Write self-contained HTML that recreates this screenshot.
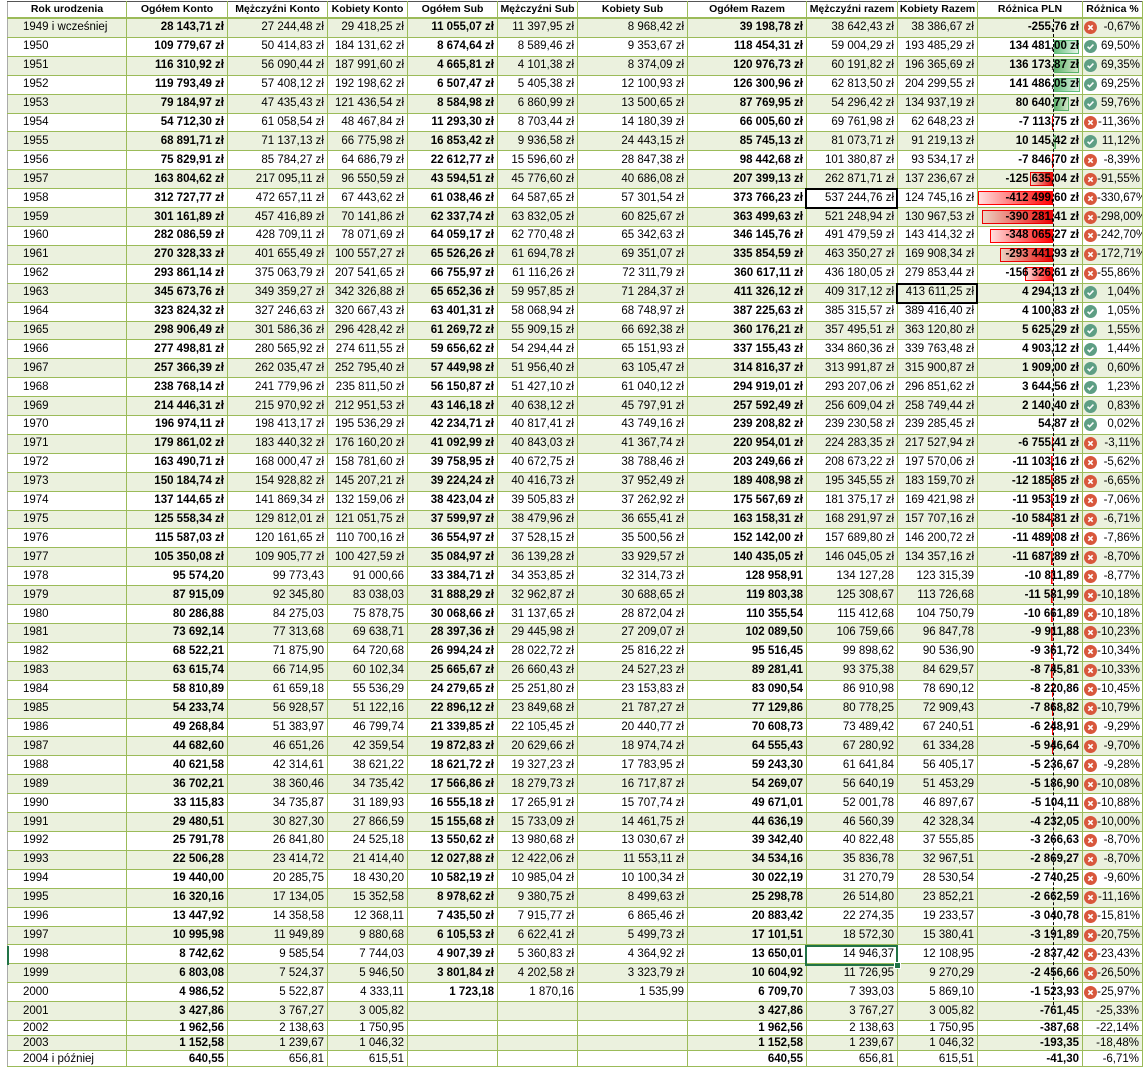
<!DOCTYPE html>
<html><head><meta charset="utf-8">
<style>
html,body{margin:0;padding:0;background:#fff;width:1146px;height:1068px;overflow:hidden}
body{position:relative;font-family:"Liberation Sans",Arial,sans-serif;font-size:11.5px;color:#000}
table{position:absolute;left:7px;top:1px;border-collapse:collapse;table-layout:fixed;width:1135px}
td{border-right:1px solid #9bbb59;border-bottom:1px solid #9bbb59;height:17.92px;padding:0 3px 0 0;text-align:right;white-space:nowrap;overflow:hidden;line-height:17px;vertical-align:middle}
tr.h td{font-weight:bold;text-align:center;border-top:1px solid #555;border-bottom:2px solid #9bbb59;height:15px;line-height:15px;padding:0;font-size:10.5px}
tr:nth-child(even) td{background:#ebf1de}
td:first-child{text-align:left;padding-left:15px;border-left:1px solid #aaa}
tr.h td:first-child{padding-left:0;text-align:center}
td:nth-child(2),td:nth-child(5),td:nth-child(8),td:nth-child(11){font-weight:bold}
tr.s td{height:14px;line-height:13px}
tr.l td{height:15px;line-height:14px}
td.p{padding-left:1px;padding-right:2px}
td.p svg{float:left;margin-top:2px}
.bar{position:absolute;height:14px;mix-blend-mode:multiply;box-sizing:border-box}
.g{background:linear-gradient(to right,#63be7b,#e6f4e9);border:1px solid #63be7b;border-left:none}
.r{background:linear-gradient(to right,#ffdede,#ff0000);border:1px solid #ff0000;border-right:none}
.z{position:absolute;left:1053px;top:19px;height:986px;border-left:1px dashed #000}
.bx{position:absolute;box-sizing:border-box;border:2px solid #000}
</style></head><body>
<svg width="0" height="0" style="position:absolute"><defs>
<symbol id="ok" viewBox="0 0 12 12"><circle cx="6" cy="6" r="6" fill="#5e9e84"/><path d="M3.3 6.2l1.8 1.8 3.6-3.8" stroke="#fff" stroke-width="1.4" fill="none"/></symbol>
<symbol id="no" viewBox="0 0 12 12"><circle cx="6" cy="6" r="6" fill="#d8573c"/><path d="M4 4l4 4M8 4l-4 4" stroke="#fff" stroke-width="1.5"/></symbol>
</defs></svg>
<table>
<colgroup><col style="width:119px"><col style="width:101px"><col style="width:100px"><col style="width:80px"><col style="width:90px"><col style="width:80px"><col style="width:110px"><col style="width:119px"><col style="width:91px"><col style="width:80px"><col style="width:105px"><col style="width:60px"></colgroup>
<tr class="h"><td>Rok urodzenia</td><td>Ogółem Konto</td><td>Mężczyźni Konto</td><td>Kobiety Konto</td><td>Ogółem Sub</td><td>Mężczyźni Sub</td><td>Kobiety Sub</td><td>Ogółem Razem</td><td>Mężczyźni razem</td><td>Kobiety Razem</td><td>Różnica PLN</td><td>Różnica %</td></tr>
<tr><td>1949 i wcześniej</td><td>28 143,71 zł</td><td>27 244,48 zł</td><td>29 418,25 zł</td><td>11 055,07 zł</td><td>11 397,95 zł</td><td>8 968,42 zł</td><td>39 198,78 zł</td><td>38 642,43 zł</td><td>38 386,67 zł</td><td>-255,76 zł</td><td class="p"><svg width="13" height="13"><use href="#no"/></svg>-0,67%</td></tr>
<tr><td>1950</td><td>109 779,67 zł</td><td>50 414,83 zł</td><td>184 131,62 zł</td><td>8 674,64 zł</td><td>8 589,46 zł</td><td>9 353,67 zł</td><td>118 454,31 zł</td><td>59 004,29 zł</td><td>193 485,29 zł</td><td>134 481,00 zł</td><td class="p"><svg width="13" height="13"><use href="#ok"/></svg>69,50%</td></tr>
<tr><td>1951</td><td>116 310,92 zł</td><td>56 090,44 zł</td><td>187 991,60 zł</td><td>4 665,81 zł</td><td>4 101,38 zł</td><td>8 374,09 zł</td><td>120 976,73 zł</td><td>60 191,82 zł</td><td>196 365,69 zł</td><td>136 173,87 zł</td><td class="p"><svg width="13" height="13"><use href="#ok"/></svg>69,35%</td></tr>
<tr><td>1952</td><td>119 793,49 zł</td><td>57 408,12 zł</td><td>192 198,62 zł</td><td>6 507,47 zł</td><td>5 405,38 zł</td><td>12 100,93 zł</td><td>126 300,96 zł</td><td>62 813,50 zł</td><td>204 299,55 zł</td><td>141 486,05 zł</td><td class="p"><svg width="13" height="13"><use href="#ok"/></svg>69,25%</td></tr>
<tr><td>1953</td><td>79 184,97 zł</td><td>47 435,43 zł</td><td>121 436,54 zł</td><td>8 584,98 zł</td><td>6 860,99 zł</td><td>13 500,65 zł</td><td>87 769,95 zł</td><td>54 296,42 zł</td><td>134 937,19 zł</td><td>80 640,77 zł</td><td class="p"><svg width="13" height="13"><use href="#ok"/></svg>59,76%</td></tr>
<tr><td>1954</td><td>54 712,30 zł</td><td>61 058,54 zł</td><td>48 467,84 zł</td><td>11 293,30 zł</td><td>8 703,44 zł</td><td>14 180,39 zł</td><td>66 005,60 zł</td><td>69 761,98 zł</td><td>62 648,23 zł</td><td>-7 113,75 zł</td><td class="p"><svg width="13" height="13"><use href="#no"/></svg>-11,36%</td></tr>
<tr><td>1955</td><td>68 891,71 zł</td><td>71 137,13 zł</td><td>66 775,98 zł</td><td>16 853,42 zł</td><td>9 936,58 zł</td><td>24 443,15 zł</td><td>85 745,13 zł</td><td>81 073,71 zł</td><td>91 219,13 zł</td><td>10 145,42 zł</td><td class="p"><svg width="13" height="13"><use href="#ok"/></svg>11,12%</td></tr>
<tr><td>1956</td><td>75 829,91 zł</td><td>85 784,27 zł</td><td>64 686,79 zł</td><td>22 612,77 zł</td><td>15 596,60 zł</td><td>28 847,38 zł</td><td>98 442,68 zł</td><td>101 380,87 zł</td><td>93 534,17 zł</td><td>-7 846,70 zł</td><td class="p"><svg width="13" height="13"><use href="#no"/></svg>-8,39%</td></tr>
<tr><td>1957</td><td>163 804,62 zł</td><td>217 095,11 zł</td><td>96 550,59 zł</td><td>43 594,51 zł</td><td>45 776,60 zł</td><td>40 686,08 zł</td><td>207 399,13 zł</td><td>262 871,71 zł</td><td>137 236,67 zł</td><td>-125 635,04 zł</td><td class="p"><svg width="13" height="13"><use href="#no"/></svg>-91,55%</td></tr>
<tr><td>1958</td><td>312 727,77 zł</td><td>472 657,11 zł</td><td>67 443,62 zł</td><td>61 038,46 zł</td><td>64 587,65 zł</td><td>57 301,54 zł</td><td>373 766,23 zł</td><td>537 244,76 zł</td><td>124 745,16 zł</td><td>-412 499,60 zł</td><td class="p"><svg width="13" height="13"><use href="#no"/></svg>-330,67%</td></tr>
<tr><td>1959</td><td>301 161,89 zł</td><td>457 416,89 zł</td><td>70 141,86 zł</td><td>62 337,74 zł</td><td>63 832,05 zł</td><td>60 825,67 zł</td><td>363 499,63 zł</td><td>521 248,94 zł</td><td>130 967,53 zł</td><td>-390 281,41 zł</td><td class="p"><svg width="13" height="13"><use href="#no"/></svg>-298,00%</td></tr>
<tr><td>1960</td><td>282 086,59 zł</td><td>428 709,11 zł</td><td>78 071,69 zł</td><td>64 059,17 zł</td><td>62 770,48 zł</td><td>65 342,63 zł</td><td>346 145,76 zł</td><td>491 479,59 zł</td><td>143 414,32 zł</td><td>-348 065,27 zł</td><td class="p"><svg width="13" height="13"><use href="#no"/></svg>-242,70%</td></tr>
<tr><td>1961</td><td>270 328,33 zł</td><td>401 655,49 zł</td><td>100 557,27 zł</td><td>65 526,26 zł</td><td>61 694,78 zł</td><td>69 351,07 zł</td><td>335 854,59 zł</td><td>463 350,27 zł</td><td>169 908,34 zł</td><td>-293 441,93 zł</td><td class="p"><svg width="13" height="13"><use href="#no"/></svg>-172,71%</td></tr>
<tr><td>1962</td><td>293 861,14 zł</td><td>375 063,79 zł</td><td>207 541,65 zł</td><td>66 755,97 zł</td><td>61 116,26 zł</td><td>72 311,79 zł</td><td>360 617,11 zł</td><td>436 180,05 zł</td><td>279 853,44 zł</td><td>-156 326,61 zł</td><td class="p"><svg width="13" height="13"><use href="#no"/></svg>-55,86%</td></tr>
<tr><td>1963</td><td>345 673,76 zł</td><td>349 359,27 zł</td><td>342 326,88 zł</td><td>65 652,36 zł</td><td>59 957,85 zł</td><td>71 284,37 zł</td><td>411 326,12 zł</td><td>409 317,12 zł</td><td>413 611,25 zł</td><td>4 294,13 zł</td><td class="p"><svg width="13" height="13"><use href="#ok"/></svg>1,04%</td></tr>
<tr><td>1964</td><td>323 824,32 zł</td><td>327 246,63 zł</td><td>320 667,43 zł</td><td>63 401,31 zł</td><td>58 068,94 zł</td><td>68 748,97 zł</td><td>387 225,63 zł</td><td>385 315,57 zł</td><td>389 416,40 zł</td><td>4 100,83 zł</td><td class="p"><svg width="13" height="13"><use href="#ok"/></svg>1,05%</td></tr>
<tr><td>1965</td><td>298 906,49 zł</td><td>301 586,36 zł</td><td>296 428,42 zł</td><td>61 269,72 zł</td><td>55 909,15 zł</td><td>66 692,38 zł</td><td>360 176,21 zł</td><td>357 495,51 zł</td><td>363 120,80 zł</td><td>5 625,29 zł</td><td class="p"><svg width="13" height="13"><use href="#ok"/></svg>1,55%</td></tr>
<tr><td>1966</td><td>277 498,81 zł</td><td>280 565,92 zł</td><td>274 611,55 zł</td><td>59 656,62 zł</td><td>54 294,44 zł</td><td>65 151,93 zł</td><td>337 155,43 zł</td><td>334 860,36 zł</td><td>339 763,48 zł</td><td>4 903,12 zł</td><td class="p"><svg width="13" height="13"><use href="#ok"/></svg>1,44%</td></tr>
<tr><td>1967</td><td>257 366,39 zł</td><td>262 035,47 zł</td><td>252 795,40 zł</td><td>57 449,98 zł</td><td>51 956,40 zł</td><td>63 105,47 zł</td><td>314 816,37 zł</td><td>313 991,87 zł</td><td>315 900,87 zł</td><td>1 909,00 zł</td><td class="p"><svg width="13" height="13"><use href="#ok"/></svg>0,60%</td></tr>
<tr><td>1968</td><td>238 768,14 zł</td><td>241 779,96 zł</td><td>235 811,50 zł</td><td>56 150,87 zł</td><td>51 427,10 zł</td><td>61 040,12 zł</td><td>294 919,01 zł</td><td>293 207,06 zł</td><td>296 851,62 zł</td><td>3 644,56 zł</td><td class="p"><svg width="13" height="13"><use href="#ok"/></svg>1,23%</td></tr>
<tr><td>1969</td><td>214 446,31 zł</td><td>215 970,92 zł</td><td>212 951,53 zł</td><td>43 146,18 zł</td><td>40 638,12 zł</td><td>45 797,91 zł</td><td>257 592,49 zł</td><td>256 609,04 zł</td><td>258 749,44 zł</td><td>2 140,40 zł</td><td class="p"><svg width="13" height="13"><use href="#ok"/></svg>0,83%</td></tr>
<tr><td>1970</td><td>196 974,11 zł</td><td>198 413,17 zł</td><td>195 536,29 zł</td><td>42 234,71 zł</td><td>40 817,41 zł</td><td>43 749,16 zł</td><td>239 208,82 zł</td><td>239 230,58 zł</td><td>239 285,45 zł</td><td>54,87 zł</td><td class="p"><svg width="13" height="13"><use href="#ok"/></svg>0,02%</td></tr>
<tr><td>1971</td><td>179 861,02 zł</td><td>183 440,32 zł</td><td>176 160,20 zł</td><td>41 092,99 zł</td><td>40 843,03 zł</td><td>41 367,74 zł</td><td>220 954,01 zł</td><td>224 283,35 zł</td><td>217 527,94 zł</td><td>-6 755,41 zł</td><td class="p"><svg width="13" height="13"><use href="#no"/></svg>-3,11%</td></tr>
<tr><td>1972</td><td>163 490,71 zł</td><td>168 000,47 zł</td><td>158 781,60 zł</td><td>39 758,95 zł</td><td>40 672,75 zł</td><td>38 788,46 zł</td><td>203 249,66 zł</td><td>208 673,22 zł</td><td>197 570,06 zł</td><td>-11 103,16 zł</td><td class="p"><svg width="13" height="13"><use href="#no"/></svg>-5,62%</td></tr>
<tr><td>1973</td><td>150 184,74 zł</td><td>154 928,82 zł</td><td>145 207,21 zł</td><td>39 224,24 zł</td><td>40 416,73 zł</td><td>37 952,49 zł</td><td>189 408,98 zł</td><td>195 345,55 zł</td><td>183 159,70 zł</td><td>-12 185,85 zł</td><td class="p"><svg width="13" height="13"><use href="#no"/></svg>-6,65%</td></tr>
<tr><td>1974</td><td>137 144,65 zł</td><td>141 869,34 zł</td><td>132 159,06 zł</td><td>38 423,04 zł</td><td>39 505,83 zł</td><td>37 262,92 zł</td><td>175 567,69 zł</td><td>181 375,17 zł</td><td>169 421,98 zł</td><td>-11 953,19 zł</td><td class="p"><svg width="13" height="13"><use href="#no"/></svg>-7,06%</td></tr>
<tr><td>1975</td><td>125 558,34 zł</td><td>129 812,01 zł</td><td>121 051,75 zł</td><td>37 599,97 zł</td><td>38 479,96 zł</td><td>36 655,41 zł</td><td>163 158,31 zł</td><td>168 291,97 zł</td><td>157 707,16 zł</td><td>-10 584,81 zł</td><td class="p"><svg width="13" height="13"><use href="#no"/></svg>-6,71%</td></tr>
<tr><td>1976</td><td>115 587,03 zł</td><td>120 161,65 zł</td><td>110 700,16 zł</td><td>36 554,97 zł</td><td>37 528,15 zł</td><td>35 500,56 zł</td><td>152 142,00 zł</td><td>157 689,80 zł</td><td>146 200,72 zł</td><td>-11 489,08 zł</td><td class="p"><svg width="13" height="13"><use href="#no"/></svg>-7,86%</td></tr>
<tr><td>1977</td><td>105 350,08 zł</td><td>109 905,77 zł</td><td>100 427,59 zł</td><td>35 084,97 zł</td><td>36 139,28 zł</td><td>33 929,57 zł</td><td>140 435,05 zł</td><td>146 045,05 zł</td><td>134 357,16 zł</td><td>-11 687,89 zł</td><td class="p"><svg width="13" height="13"><use href="#no"/></svg>-8,70%</td></tr>
<tr><td>1978</td><td>95 574,20</td><td>99 773,43</td><td>91 000,66</td><td>33 384,71 zł</td><td>34 353,85 zł</td><td>32 314,73 zł</td><td>128 958,91</td><td>134 127,28</td><td>123 315,39</td><td>-10 811,89</td><td class="p"><svg width="13" height="13"><use href="#no"/></svg>-8,77%</td></tr>
<tr><td>1979</td><td>87 915,09</td><td>92 345,80</td><td>83 038,03</td><td>31 888,29 zł</td><td>32 962,87 zł</td><td>30 688,65 zł</td><td>119 803,38</td><td>125 308,67</td><td>113 726,68</td><td>-11 581,99</td><td class="p"><svg width="13" height="13"><use href="#no"/></svg>-10,18%</td></tr>
<tr><td>1980</td><td>80 286,88</td><td>84 275,03</td><td>75 878,75</td><td>30 068,66 zł</td><td>31 137,65 zł</td><td>28 872,04 zł</td><td>110 355,54</td><td>115 412,68</td><td>104 750,79</td><td>-10 661,89</td><td class="p"><svg width="13" height="13"><use href="#no"/></svg>-10,18%</td></tr>
<tr><td>1981</td><td>73 692,14</td><td>77 313,68</td><td>69 638,71</td><td>28 397,36 zł</td><td>29 445,98 zł</td><td>27 209,07 zł</td><td>102 089,50</td><td>106 759,66</td><td>96 847,78</td><td>-9 911,88</td><td class="p"><svg width="13" height="13"><use href="#no"/></svg>-10,23%</td></tr>
<tr><td>1982</td><td>68 522,21</td><td>71 875,90</td><td>64 720,68</td><td>26 994,24 zł</td><td>28 022,72 zł</td><td>25 816,22 zł</td><td>95 516,45</td><td>99 898,62</td><td>90 536,90</td><td>-9 361,72</td><td class="p"><svg width="13" height="13"><use href="#no"/></svg>-10,34%</td></tr>
<tr><td>1983</td><td>63 615,74</td><td>66 714,95</td><td>60 102,34</td><td>25 665,67 zł</td><td>26 660,43 zł</td><td>24 527,23 zł</td><td>89 281,41</td><td>93 375,38</td><td>84 629,57</td><td>-8 745,81</td><td class="p"><svg width="13" height="13"><use href="#no"/></svg>-10,33%</td></tr>
<tr><td>1984</td><td>58 810,89</td><td>61 659,18</td><td>55 536,29</td><td>24 279,65 zł</td><td>25 251,80 zł</td><td>23 153,83 zł</td><td>83 090,54</td><td>86 910,98</td><td>78 690,12</td><td>-8 220,86</td><td class="p"><svg width="13" height="13"><use href="#no"/></svg>-10,45%</td></tr>
<tr><td>1985</td><td>54 233,74</td><td>56 928,57</td><td>51 122,16</td><td>22 896,12 zł</td><td>23 849,68 zł</td><td>21 787,27 zł</td><td>77 129,86</td><td>80 778,25</td><td>72 909,43</td><td>-7 868,82</td><td class="p"><svg width="13" height="13"><use href="#no"/></svg>-10,79%</td></tr>
<tr><td>1986</td><td>49 268,84</td><td>51 383,97</td><td>46 799,74</td><td>21 339,85 zł</td><td>22 105,45 zł</td><td>20 440,77 zł</td><td>70 608,73</td><td>73 489,42</td><td>67 240,51</td><td>-6 248,91</td><td class="p"><svg width="13" height="13"><use href="#no"/></svg>-9,29%</td></tr>
<tr><td>1987</td><td>44 682,60</td><td>46 651,26</td><td>42 359,54</td><td>19 872,83 zł</td><td>20 629,66 zł</td><td>18 974,74 zł</td><td>64 555,43</td><td>67 280,92</td><td>61 334,28</td><td>-5 946,64</td><td class="p"><svg width="13" height="13"><use href="#no"/></svg>-9,70%</td></tr>
<tr><td>1988</td><td>40 621,58</td><td>42 314,61</td><td>38 621,22</td><td>18 621,72 zł</td><td>19 327,23 zł</td><td>17 783,95 zł</td><td>59 243,30</td><td>61 641,84</td><td>56 405,17</td><td>-5 236,67</td><td class="p"><svg width="13" height="13"><use href="#no"/></svg>-9,28%</td></tr>
<tr><td>1989</td><td>36 702,21</td><td>38 360,46</td><td>34 735,42</td><td>17 566,86 zł</td><td>18 279,73 zł</td><td>16 717,87 zł</td><td>54 269,07</td><td>56 640,19</td><td>51 453,29</td><td>-5 186,90</td><td class="p"><svg width="13" height="13"><use href="#no"/></svg>-10,08%</td></tr>
<tr><td>1990</td><td>33 115,83</td><td>34 735,87</td><td>31 189,93</td><td>16 555,18 zł</td><td>17 265,91 zł</td><td>15 707,74 zł</td><td>49 671,01</td><td>52 001,78</td><td>46 897,67</td><td>-5 104,11</td><td class="p"><svg width="13" height="13"><use href="#no"/></svg>-10,88%</td></tr>
<tr><td>1991</td><td>29 480,51</td><td>30 827,30</td><td>27 866,59</td><td>15 155,68 zł</td><td>15 733,09 zł</td><td>14 461,75 zł</td><td>44 636,19</td><td>46 560,39</td><td>42 328,34</td><td>-4 232,05</td><td class="p"><svg width="13" height="13"><use href="#no"/></svg>-10,00%</td></tr>
<tr><td>1992</td><td>25 791,78</td><td>26 841,80</td><td>24 525,18</td><td>13 550,62 zł</td><td>13 980,68 zł</td><td>13 030,67 zł</td><td>39 342,40</td><td>40 822,48</td><td>37 555,85</td><td>-3 266,63</td><td class="p"><svg width="13" height="13"><use href="#no"/></svg>-8,70%</td></tr>
<tr><td>1993</td><td>22 506,28</td><td>23 414,72</td><td>21 414,40</td><td>12 027,88 zł</td><td>12 422,06 zł</td><td>11 553,11 zł</td><td>34 534,16</td><td>35 836,78</td><td>32 967,51</td><td>-2 869,27</td><td class="p"><svg width="13" height="13"><use href="#no"/></svg>-8,70%</td></tr>
<tr><td>1994</td><td>19 440,00</td><td>20 285,75</td><td>18 430,20</td><td>10 582,19 zł</td><td>10 985,04 zł</td><td>10 100,34 zł</td><td>30 022,19</td><td>31 270,79</td><td>28 530,54</td><td>-2 740,25</td><td class="p"><svg width="13" height="13"><use href="#no"/></svg>-9,60%</td></tr>
<tr><td>1995</td><td>16 320,16</td><td>17 134,05</td><td>15 352,58</td><td>8 978,62 zł</td><td>9 380,75 zł</td><td>8 499,63 zł</td><td>25 298,78</td><td>26 514,80</td><td>23 852,21</td><td>-2 662,59</td><td class="p"><svg width="13" height="13"><use href="#no"/></svg>-11,16%</td></tr>
<tr><td>1996</td><td>13 447,92</td><td>14 358,58</td><td>12 368,11</td><td>7 435,50 zł</td><td>7 915,77 zł</td><td>6 865,46 zł</td><td>20 883,42</td><td>22 274,35</td><td>19 233,57</td><td>-3 040,78</td><td class="p"><svg width="13" height="13"><use href="#no"/></svg>-15,81%</td></tr>
<tr><td>1997</td><td>10 995,98</td><td>11 949,89</td><td>9 880,68</td><td>6 105,53 zł</td><td>6 622,41 zł</td><td>5 499,73 zł</td><td>17 101,51</td><td>18 572,30</td><td>15 380,41</td><td>-3 191,89</td><td class="p"><svg width="13" height="13"><use href="#no"/></svg>-20,75%</td></tr>
<tr><td>1998</td><td>8 742,62</td><td>9 585,54</td><td>7 744,03</td><td>4 907,39 zł</td><td>5 360,83 zł</td><td>4 364,92 zł</td><td>13 650,01</td><td>14 946,37</td><td>12 108,95</td><td>-2 837,42</td><td class="p"><svg width="13" height="13"><use href="#no"/></svg>-23,43%</td></tr>
<tr><td>1999</td><td>6 803,08</td><td>7 524,37</td><td>5 946,50</td><td>3 801,84 zł</td><td>4 202,58 zł</td><td>3 323,79 zł</td><td>10 604,92</td><td>11 726,95</td><td>9 270,29</td><td>-2 456,66</td><td class="p"><svg width="13" height="13"><use href="#no"/></svg>-26,50%</td></tr>
<tr><td>2000</td><td>4 986,52</td><td>5 522,87</td><td>4 333,11</td><td>1 723,18</td><td>1 870,16</td><td>1 535,99</td><td>6 709,70</td><td>7 393,03</td><td>5 869,10</td><td>-1 523,93</td><td class="p"><svg width="13" height="13"><use href="#no"/></svg>-25,97%</td></tr>
<tr><td>2001</td><td>3 427,86</td><td>3 767,27</td><td>3 005,82</td><td></td><td></td><td></td><td>3 427,86</td><td>3 767,27</td><td>3 005,82</td><td>-761,45</td><td>-25,33%</td></tr>
<tr class="s"><td>2002</td><td>1 962,56</td><td>2 138,63</td><td>1 750,95</td><td></td><td></td><td></td><td>1 962,56</td><td>2 138,63</td><td>1 750,95</td><td>-387,68</td><td>-22,14%</td></tr>
<tr class="s"><td>2003</td><td>1 152,58</td><td>1 239,67</td><td>1 046,32</td><td></td><td></td><td></td><td>1 152,58</td><td>1 239,67</td><td>1 046,32</td><td>-193,35</td><td>-18,48%</td></tr>
<tr class="l"><td>2004 i później</td><td>640,55</td><td>656,81</td><td>615,51</td><td></td><td></td><td></td><td>640,55</td><td>656,81</td><td>615,51</td><td>-41,30</td><td>-6,71%</td></tr>
</table>

<div class="bar g" style="left:1054px;top:40px;width:24.5px"></div>
<div class="bar g" style="left:1054px;top:59px;width:24.8px"></div>
<div class="bar g" style="left:1054px;top:78px;width:25.7px"></div>
<div class="bar g" style="left:1054px;top:97px;width:14.7px"></div>
<div class="bar r" style="left:1051.7px;top:116px;width:1.3px"></div>
<div class="bar g" style="left:1054px;top:135px;width:1.8px"></div>
<div class="bar r" style="left:1051.6px;top:154px;width:1.4px"></div>
<div class="bar r" style="left:1030.2px;top:172.4px;width:22.8px"></div>
<div class="bar r" style="left:978px;top:191.3px;width:75px"></div>
<div class="bar r" style="left:982px;top:210.2px;width:71px"></div>
<div class="bar r" style="left:989.7px;top:229.1px;width:63.3px"></div>
<div class="bar r" style="left:999.6px;top:248px;width:53.4px"></div>
<div class="bar r" style="left:1024.6px;top:267px;width:28.4px"></div>
<div class="bar r" style="left:1051.8px;top:437.3px;width:1.2px"></div>
<div class="bar r" style="left:1051px;top:456.2px;width:2px"></div>
<div class="bar r" style="left:1050.8px;top:475.1px;width:2.2px"></div>
<div class="bar r" style="left:1050.8px;top:494px;width:2.2px"></div>
<div class="bar r" style="left:1051.1px;top:513px;width:1.9px"></div>
<div class="bar r" style="left:1050.9px;top:531.9px;width:2.1px"></div>
<div class="bar r" style="left:1050.9px;top:550.8px;width:2.1px"></div>
<div class="bar r" style="left:1051px;top:569.7px;width:2px"></div>
<div class="bar r" style="left:1050.9px;top:588.6px;width:2.1px"></div>
<div class="bar r" style="left:1051.1px;top:607.6px;width:1.9px"></div>
<div class="bar r" style="left:1051.2px;top:626.5px;width:1.8px"></div>
<div class="bar r" style="left:1051.3px;top:645.4px;width:1.7px"></div>
<div class="bar r" style="left:1051.4px;top:664.3px;width:1.6px"></div>
<div class="bar r" style="left:1051.5px;top:683.2px;width:1.5px"></div>
<div class="bar r" style="left:1051.6px;top:702.2px;width:1.4px"></div>
<div class="bar r" style="left:1051.9px;top:721px;width:1.1px"></div>
<div class="bar r" style="left:1051.9px;top:740px;width:1.1px"></div>
<div class="z"></div>

<div class="bx" style="left:805px;top:188px;width:93px;height:21px"></div>
<div class="bx" style="left:896px;top:283px;width:82px;height:21px"></div>
<div class="bx" style="left:805px;top:945px;width:93px;height:21px;border-color:#217346"></div>
<div style="position:absolute;left:894px;top:962px;width:5px;height:5px;background:#217346;border:1px solid #fff"></div>
<div style="position:absolute;left:7px;top:946px;width:2px;height:19px;background:#217346"></div>
</body></html>
